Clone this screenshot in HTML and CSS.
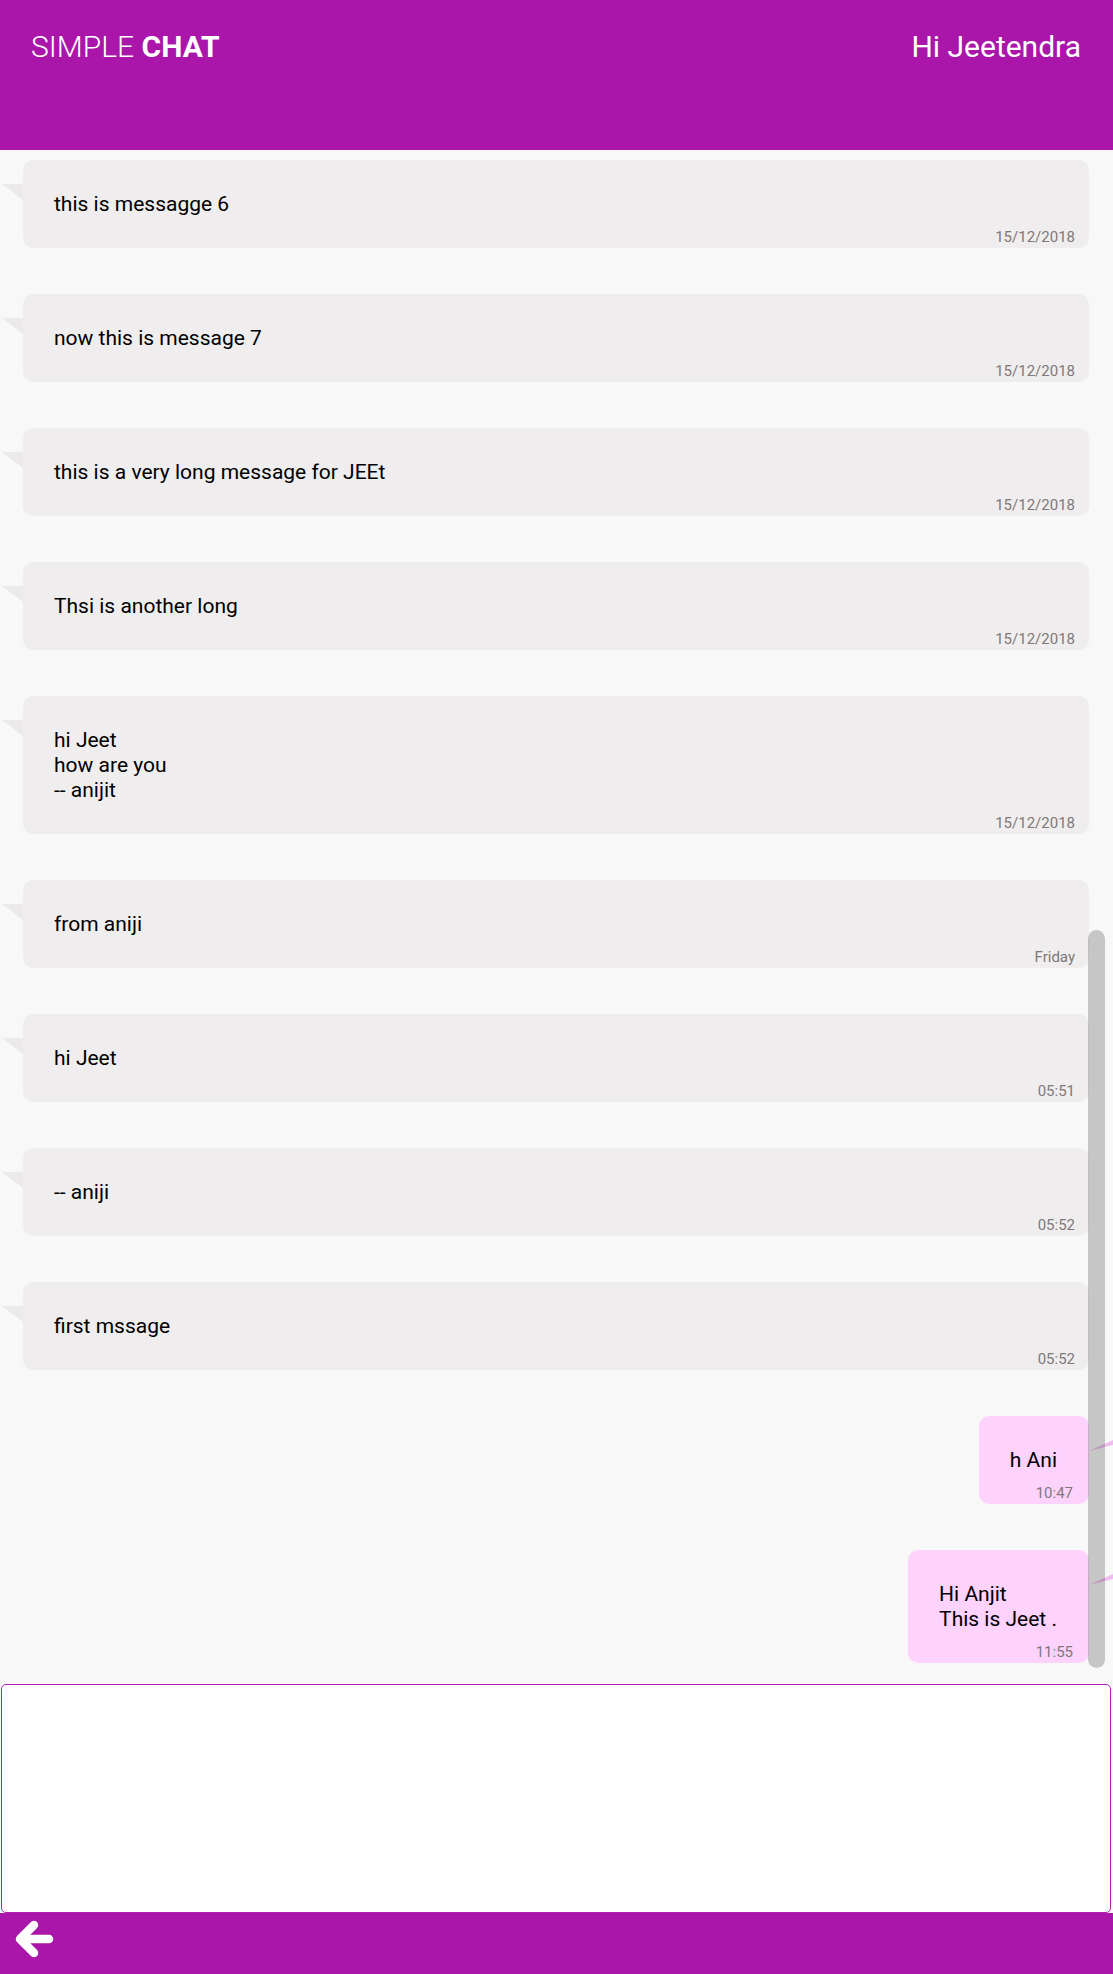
FILE: index.html
```html
<!DOCTYPE html>
<html lang="en">
<head>
<meta charset="utf-8">
<title>Simple Chat</title>
<link rel="stylesheet" href="styles.css">
</head>
<body>
<div class="app">
  <header class="topbar">
    <h1 class="brand"><span class="brand-light">SIMPLE</span> <span class="brand-bold">CHAT</span></h1>
    <div class="greet">Hi Jeetendra</div>
  </header>

  <main class="messages">
    <div class="bubble in"><span class="tail"></span><p class="text">this is messagge 6</p><div class="time">15/12/2018</div></div>
    <div class="bubble in"><span class="tail"></span><p class="text">now this is message 7</p><div class="time">15/12/2018</div></div>
    <div class="bubble in"><span class="tail"></span><p class="text">this is a very long message for JEEt</p><div class="time">15/12/2018</div></div>
    <div class="bubble in"><span class="tail"></span><p class="text">Thsi is another long</p><div class="time">15/12/2018</div></div>
    <div class="bubble in"><span class="tail"></span><p class="text">hi Jeet<br>how are you<br>-- anijit</p><div class="time">15/12/2018</div></div>
    <div class="bubble in"><span class="tail"></span><p class="text">from aniji</p><div class="time">Friday</div></div>
    <div class="bubble in"><span class="tail"></span><p class="text">hi Jeet</p><div class="time">05:51</div></div>
    <div class="bubble in"><span class="tail"></span><p class="text">-- aniji</p><div class="time">05:52</div></div>
    <div class="bubble in"><span class="tail"></span><p class="text">first mssage</p><div class="time">05:52</div></div>
    <div class="bubble out"><span class="tail"></span><p class="text">h Ani</p><div class="time">10:47</div></div>
    <div class="bubble out"><span class="tail"></span><p class="text">Hi Anjit<br>This is Jeet .</p><div class="time">11:55</div></div>
    <div class="scroll-thumb"></div>
  </main>

  <div class="composer">
    <textarea class="input" aria-label="Message"></textarea>
  </div>

  <footer class="bottombar">
    <svg class="back" width="40" height="40" viewBox="0 0 40 40" aria-hidden="true">
      <path d="M35 20 H7 M20 6 L6 20 L20 34" fill="none" stroke="#ffffff" stroke-width="8.5" stroke-linecap="round" stroke-linejoin="round"/>
    </svg>
  </footer>
</div>
</body>
</html>
```

FILE: styles.css
```css
* { box-sizing: border-box; }

html, body {
  margin: 0;
  padding: 0;
  background: #f8f8f8;
  font-family: Roboto, "Liberation Sans", Arial, sans-serif;
}

.app {
  width: 1113px;
  height: 1974px;
  display: flex;
  flex-direction: column;
  overflow: hidden;
}

.topbar {
  height: 150px;
  flex: none;
  background: #aa15aa;
  color: #ffffff;
  display: flex;
  justify-content: space-between;
  align-items: flex-start;
  padding: 29px 32px 0 31px;
}

.brand {
  margin: 0;
  font-size: 30px;
  line-height: 35px;
  font-weight: 400;
}

.brand-light { font-weight: 300; }
.brand-bold { font-weight: 700; }

.greet {
  font-size: 30px;
  line-height: 35px;
  font-weight: 400;
}

.messages {
  position: relative;
  height: 1534px;
  flex: none;
  display: flex;
  flex-direction: column;
  align-items: stretch;
  gap: 46px;
  padding: 10px 24px 0 23px;
  overflow: hidden;
  background: #f8f8f8;
}

.bubble {
  position: relative;
  flex: none;
  border-radius: 10px;
  padding: 32px 14px 3px 31px;
}

.bubble.in {
  background: #efeded;
}

.bubble.out {
  align-self: flex-end;
  background: #fdd2fd;
  padding: 32px 16px 3px 31px;
}

.text {
  margin: 0;
  font-size: 21px;
  line-height: 25px;
  color: #000000;
}

.bubble.out .text {
  padding-right: 16px;
}

.time {
  margin-top: 12px;
  font-size: 15px;
  line-height: 16px;
  color: #7f7878;
  text-align: right;
}

.tail {
  position: absolute;
  width: 21px;
  height: 16px;
}

.bubble.in .tail {
  left: -21px;
  top: 24px;
  background: #ebe9e9;
  clip-path: polygon(0 0, 100% 0, 100% 100%);
}

.bubble.out .tail {
  left: 100%;
  top: 23px;
  width: 26px;
  height: 16px;
  background: #f0bdf0;
  clip-path: polygon(0 75%, 100% 0, 100% 35%);
}

.scroll-thumb {
  position: absolute;
  left: 1088px;
  top: 780px;
  width: 17px;
  height: 738px;
  border-radius: 9px;
  background: rgba(0, 0, 0, 0.2);
}

.composer {
  height: 229px;
  flex: none;
  padding: 0 2px 0 1px;
  background: #f8f8f8;
}

.input {
  display: block;
  width: 100%;
  height: 100%;
  margin: 0;
  border: 1.5px solid #ab22ae;
  border-radius: 5px;
  background: #ffffff;
  resize: none;
  outline: none;
  font-family: Roboto, "Liberation Sans", Arial, sans-serif;
  font-size: 20px;
}

.bottombar {
  height: 61px;
  flex: none;
  background: #aa15aa;
  padding: 6px 0 0 14px;
}

.back {
  display: block;
}
```
